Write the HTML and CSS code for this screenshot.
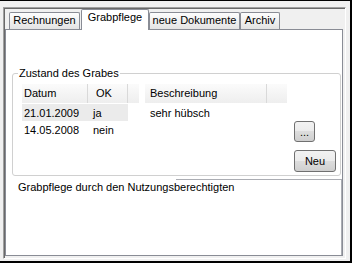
FILE: index.html
```html
<!DOCTYPE html>
<html lang="de">
<head>
    <meta charset="UTF-8">
    <title>Grabpflege</title>
    <link rel="stylesheet" href="styles.css">
</head>
<body>
    <div class="window">
        <div class="frame">
            <div class="tabs">
                <div class="tab tab-rechnungen">Rechnungen</div>
                <div class="tab tab-grabpflege active">Grabpflege</div>
                <div class="tab tab-dokumente">neue Dokumente</div>
                <div class="tab tab-archiv">Archiv</div>
            </div>

            <div class="panel">
                <fieldset class="groupbox">
                    <legend>Zustand des Grabes</legend>
                    <div class="group-row">
                        <!-- Datum / OK list -->
                        <div class="list list-dates">
                            <div class="list-head">
                                <div class="col col-datum">Datum</div>
                                <div class="col col-ok">OK</div>
                                <div class="col col-rest"></div>
                            </div>
                            <div class="list-row selected">
                                <div class="cell col-datum">21.01.2009</div>
                                <div class="cell cell-ok col-ok">ja</div>
                            </div>
                            <div class="list-row">
                                <div class="cell col-datum">14.05.2008</div>
                                <div class="cell cell-ok col-ok">nein</div>
                            </div>
                        </div>

                        <!-- Beschreibung list -->
                        <div class="list list-notes">
                            <div class="list-head">
                                <div class="col col-beschreibung">Beschreibung</div>
                                <div class="col col-rest2"></div>
                            </div>
                            <div class="list-row">
                                <div class="cell col-beschreibung">sehr hübsch</div>
                            </div>
                        </div>

                        <div class="buttons">
                            <button class="btn btn-more">...</button>
                            <button class="btn btn-new">Neu</button>
                        </div>
                    </div>
                </fieldset>

                <div class="notes">Grabpflege durch den Nutzungsberechtigten</div>
            </div>
        </div>
    </div>
</body>
</html>
```

FILE: styles.css
```css
* {
    box-sizing: border-box;
}

body {
    margin: 0;
    font-family: 'Liberation Sans', Arial, sans-serif;
    font-size: 11px;
    line-height: 13px;
    color: #000;
    background-color: #f0f0f0;
}

.window {
    width: 352px;
    height: 263px;
    padding: 6px 0 0 3px;
    border-top: 1px solid #000;
    border-right: 2px solid #000;
    border-bottom: 2px solid #000;
    background-color: #f0f0f0;
}

.frame {
    display: flex;
    flex-direction: column;
    width: 343px;
    height: 252px;
    padding: 1px 0 0 1px;
    border: 1px solid;
    border-color: #a0a0a0 #fff #fff #a0a0a0;
    box-shadow: inset 1px 1px #696969;
}

/* tab strip */
.tabs {
    display: flex;
    align-items: flex-end;
    height: 20px;
    padding-left: 4px;
}

.tab {
    height: 17px;
    padding-top: 1px;
    border: 1px solid #898c95;
    border-bottom: none;
    border-radius: 2px 2px 0 0;
    text-align: center;
    white-space: nowrap;
    background: linear-gradient(#fdfdfd, #f0f0f0 50%, #e3e3e3);
}

.tab.active {
    position: relative;
    height: 21px;
    margin-bottom: -1px;
    background: #fff;
}

.tab-rechnungen { width: 71px; margin-right: 1px; }
.tab-grabpflege { width: 68px; }
.tab-dokumente { width: 91px; }
.tab-archiv { width: 40px; }

.panel {
    display: flex;
    flex-direction: column;
    width: 338px;
    height: 227px;
    border: 1px solid #898c95;
    background-color: #fff;
}

/* group box */
.groupbox {
    height: 109px;
    margin: 37px 1px 0 6px;
    padding: 4px 0 0 9px;
    border: 1px solid #d0d0d0;
    border-radius: 3px;
}

.groupbox legend {
    margin-left: -4px;
    padding: 0 1px;
    line-height: 13px;
}

.group-row {
    display: flex;
}

.list-head {
    display: flex;
    height: 19px;
    margin-bottom: 1px;
    line-height: 19px;
    background: linear-gradient(#fbfbfb, #eeeeee);
}

.col {
    padding-left: 2px;
    border-right: 1px solid #d9d9d9;
}

.col-rest,
.col-rest2 {
    border-right: none;
}

.list-head .col-ok {
    padding-left: 8px;
}

.list-row {
    display: flex;
    height: 17px;
}

.cell {
    height: 17px;
    padding: 2px 0 0 2px;
    line-height: 15px;
    white-space: nowrap;
}

.cell-ok {
    padding-left: 5px;
}

.list-notes .col-beschreibung {
    padding-left: 5px;
}

.list-row.selected .cell {
    background-color: #ebebeb;
}

.list-dates {
    width: 117px;
    margin-right: 6px;
}

.list-notes {
    width: 142px;
    margin-right: 7px;
}

.col-datum { width: 66px; }
.col-ok { width: 40px; }
.col-rest { width: 11px; }
.col-beschreibung { width: 122px; }
.col-rest2 { width: 20px; }

/* buttons */
.buttons {
    display: flex;
    flex-direction: column;
    align-items: flex-start;
}

.btn {
    padding: 0;
    font-family: inherit;
    font-size: 11px;
    color: #000;
    border: 1px solid #707070;
    border-radius: 3px;
    background: linear-gradient(#f2f2f2, #ebebeb 50%, #dddddd 50%, #cfcfcf);
}

.btn-more {
    width: 21px;
    height: 21px;
    margin-top: 37px;
}

.btn-new {
    width: 42px;
    height: 22px;
    margin-top: 8px;
}

/* note text under the group */
.notes {
    flex: 1;
    margin-top: 3px;
    padding-left: 12px;
    border-right: 1px solid #abadb3;
}

.notes::before {
    content: "";
    display: block;
    margin: 0 0 1px 158px;
    border-top: 1px solid #abadb3;
}
```
